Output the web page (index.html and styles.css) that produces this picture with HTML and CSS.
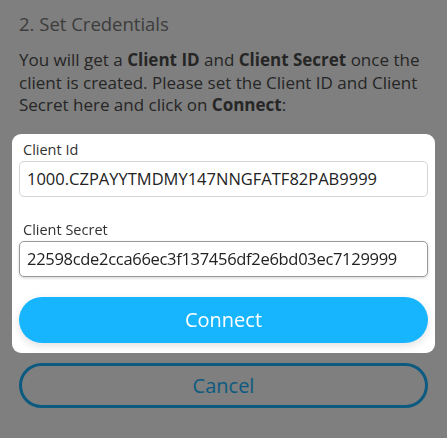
FILE: index.html
```html
<!DOCTYPE html>
<html lang="en">
  <head>
    <meta charset="UTF-8" />
    <meta name="viewport" content="width=device-width, initial-scale=1.0" />
    <title>Set Credentials</title>
    <link rel="stylesheet" href="styles.css">
  </head>
  <body>
    <div class="container">
      <h2>2. Set Credentials</h2>
      <p>
        You will get a <b>Client ID</b> and <b>Client Secret</b> once the
        client is created. Please set the Client ID and Client Secret here and
        click on <b>Connect</b>:
      </p>

      <!-- Highlighted step: sits above the dim overlay -->
      <div class="overlay"></div>
      <form class="credentials-card" id="credentialsForm">
        <div class="field">
          <label for="clientId">Client Id</label>
          <input type="text" id="clientId" value="1000.CZPAYYTMDMY147NNGFATF82PAB9999" />
        </div>
        <div class="field">
          <label for="clientSecret">Client Secret</label>
          <input type="text" id="clientSecret" class="focused" value="22598cde2cca66ec3f137456df2e6bd03ec7129999" />
        </div>
        <button type="submit" class="btn btn-primary">Connect</button>
      </form>

      <button type="button" class="btn btn-outline">Cancel</button>
    </div>
  </body>
</html>
```

FILE: styles.css
```css
body {
  font-family: "Open Sans", "Noto Sans", sans-serif;
  background-color: #fff;
  margin: 0;
  padding: 0;
  color: #4a4a4a;
}

.container {
  padding: 10px 19px;
}

h2 {
  font-size: 18.5px;
  font-weight: 400;
  line-height: 27px;
  color: #7a7a7a;
  margin: 0 0 12px;
}

p {
  font-size: 17px;
  line-height: 22.5px;
  margin: 0 0 17px;
  color: #4c4c4c;
}

p b {
  font-weight: 700;
}

.overlay {
  position: fixed;
  inset: 0;
  background: rgba(0, 0, 0, 0.5);
  z-index: 1;
}

.credentials-card {
  position: relative;
  z-index: 2;
  background: #fff;
  border-radius: 9px;
  margin: 0 -7px;
  padding: 7px 7px 10px;
  display: flex;
  flex-direction: column;
}

.field {
  display: flex;
  flex-direction: column;
  gap: 3px;
  margin-bottom: 24px;
}

.field + .field {
  margin-bottom: 20px;
}

.field label {
  font-size: 14.5px;
  line-height: 17px;
  padding-left: 4px;
  color: #333;
}

.field input {
  font-family: inherit;
  font-size: 16.5px;
  height: 36px;
  box-sizing: border-box;
  padding: 0 7px;
  border: 1px solid #d4d4d4;
  border-radius: 5px;
  color: #222;
  outline: none;
}

.field input.focused {
  border-color: #9a9a9a;
  letter-spacing: -0.3px;
  box-shadow: 0 1px 3px rgba(0, 0, 0, 0.18);
}

.btn {
  font-family: inherit;
  font-size: 20px;
  width: 100%;
  border-radius: 24px;
  cursor: pointer;
}

.btn-primary {
  height: 46px;
  background-color: #18b5ff;
  color: #fff;
  border: none;
  box-shadow: 0 3px 8px rgba(0, 0, 0, 0.12);
}

.btn-outline {
  height: 45px;
  margin-top: 10px;
  background: transparent;
  color: #18b5ff;
  border: 3px solid #18b5ff;
}
```
